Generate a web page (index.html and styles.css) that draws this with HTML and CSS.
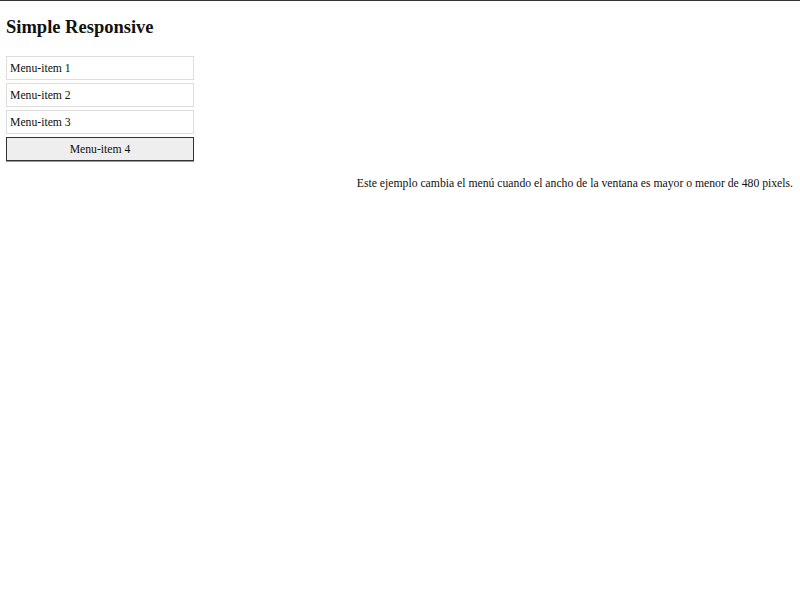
FILE: index.html
```html
<!DOCTYPE html>
<html>
<head>
<meta charset="utf-8">
<title>Simple Responsive</title>
<link rel="stylesheet" href="styles.css">
</head>
<body>
<h1 class="title">Simple Responsive</h1>
<nav class="menu">
  <a class="menu-item">Menu-item 1</a>
  <a class="menu-item">Menu-item 2</a>
  <a class="menu-item">Menu-item 3</a>
  <a class="menu-item menu-item--button">Menu-item 4</a>
</nav>
<p class="note">Este ejemplo cambia el menú cuando el ancho de la ventana es mayor o menor de 480 pixels.</p>
</body>
</html>
```
FILE: styles.css
```css
html {
  border-top: 1px solid #333;
  background: #fff;
}
body {
  margin: 0;
  padding: 0 7px 0 6px;
  font-family: "Liberation Serif", "Times New Roman", serif;
  font-size: 11.7px;
  color: #111;
}
.title {
  font-size: 18.5px;
  font-weight: bold;
  margin: 15px 0 18px;
  line-height: 22px;
}
.menu {
  display: flex;
  flex-direction: column;
  gap: 3px;
  width: 188px;
}
.menu-item {
  display: block;
  box-sizing: border-box;
  height: 24px;
  line-height: 23px;
  padding: 0 3px;
  border: 1px solid #ddd;
  color: #111;
}
.menu-item--button {
  border-color: #333;
  background: #eee;
  text-align: center;
  box-shadow: 0 1px 0 #999;
}
.note {
  text-align: right;
  margin: 16px 0;
}
```
